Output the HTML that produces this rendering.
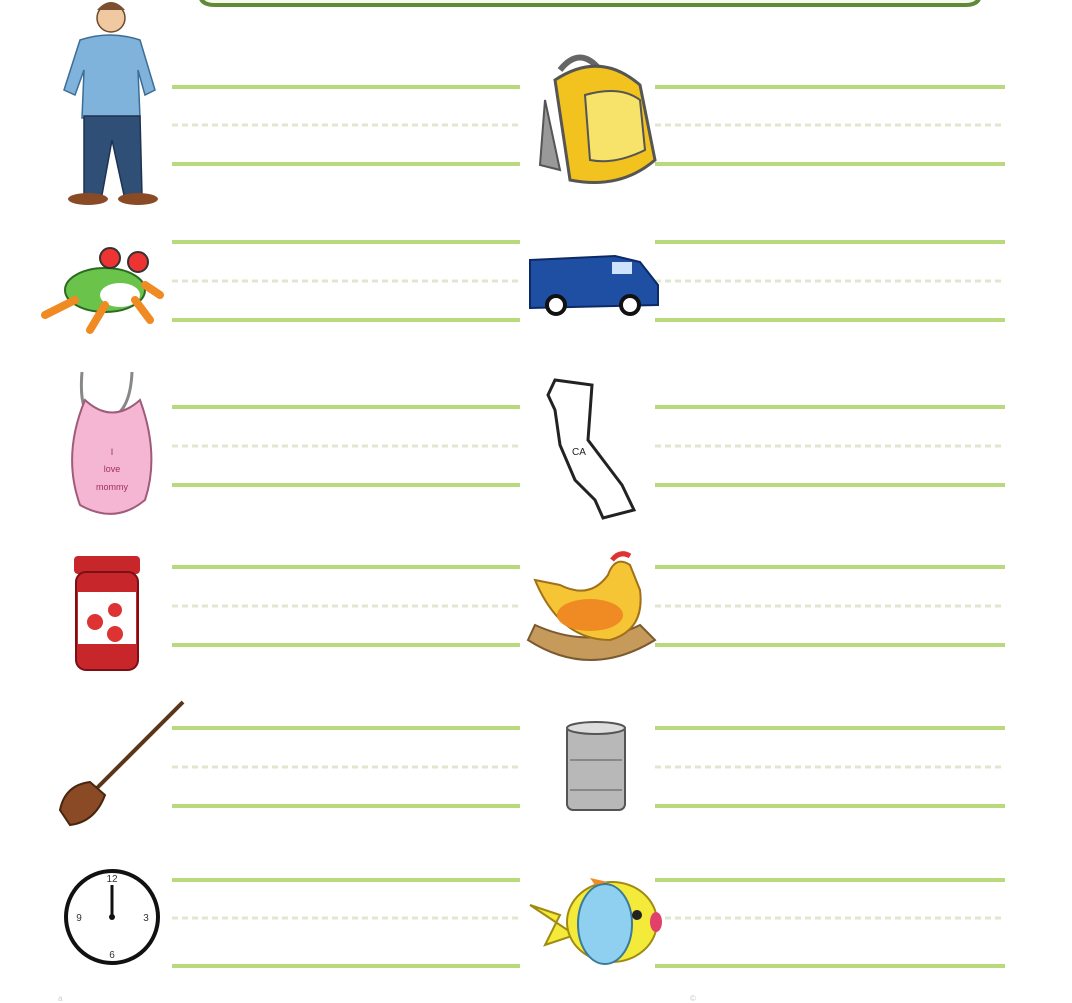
<!DOCTYPE html>
<html><head><meta charset="utf-8"><style>
html,body{margin:0;padding:0;background:#fff;width:1072px;height:1003px;overflow:hidden}
svg{display:block}
</style></head><body>
<svg width="1072" height="1003" viewBox="0 0 1072 1003" xmlns="http://www.w3.org/2000/svg">
<rect width="1072" height="1003" fill="#fff"/>
<path d="M200,-20 L200,-6 Q200,5 215,5 L965,5 Q980,5 980,-6 L980,-20" fill="#f6fbee" stroke="#5f8a3a" stroke-width="4"/>
<g stroke="#b8d97c" stroke-width="4">
<line x1="172" y1="87" x2="520" y2="87"/><line x1="172" y1="164" x2="520" y2="164"/>
<line x1="655" y1="87" x2="1005" y2="87"/><line x1="655" y1="164" x2="1005" y2="164"/>
<line x1="172" y1="242" x2="520" y2="242"/><line x1="172" y1="320" x2="520" y2="320"/>
<line x1="655" y1="242" x2="1005" y2="242"/><line x1="655" y1="320" x2="1005" y2="320"/>
<line x1="172" y1="407" x2="520" y2="407"/><line x1="172" y1="485" x2="520" y2="485"/>
<line x1="655" y1="407" x2="1005" y2="407"/><line x1="655" y1="485" x2="1005" y2="485"/>
<line x1="172" y1="567" x2="520" y2="567"/><line x1="172" y1="645" x2="520" y2="645"/>
<line x1="655" y1="567" x2="1005" y2="567"/><line x1="655" y1="645" x2="1005" y2="645"/>
<line x1="172" y1="728" x2="520" y2="728"/><line x1="172" y1="806" x2="520" y2="806"/>
<line x1="655" y1="728" x2="1005" y2="728"/><line x1="655" y1="806" x2="1005" y2="806"/>
<line x1="172" y1="880" x2="520" y2="880"/><line x1="172" y1="966" x2="520" y2="966"/>
<line x1="655" y1="880" x2="1005" y2="880"/><line x1="655" y1="966" x2="1005" y2="966"/>
</g>
<g stroke="#dfe8cf" stroke-width="3" stroke-dasharray="6 4">
<line x1="172" y1="125" x2="520" y2="125"/><line x1="655" y1="125" x2="1005" y2="125"/>
<line x1="172" y1="281" x2="520" y2="281"/><line x1="655" y1="281" x2="1005" y2="281"/>
<line x1="172" y1="446" x2="520" y2="446"/><line x1="655" y1="446" x2="1005" y2="446"/>
<line x1="172" y1="606" x2="520" y2="606"/><line x1="655" y1="606" x2="1005" y2="606"/>
<line x1="172" y1="767" x2="520" y2="767"/><line x1="655" y1="767" x2="1005" y2="767"/>
<line x1="172" y1="918" x2="520" y2="918"/><line x1="655" y1="918" x2="1005" y2="918"/>
</g>
<!-- man -->
<circle cx="111" cy="18" r="14" fill="#f1c9a0" stroke="#6b4a2b" stroke-width="1.5"/>
<path d="M97,10 Q111,-6 125,10" fill="#7a5030"/>
<path d="M80,40 Q110,30 140,40 L155,90 L145,95 L138,70 L140,118 L82,118 L84,70 L75,95 L64,90 Z" fill="#7fb3dc" stroke="#3d6d94" stroke-width="1.5"/>
<path d="M84,116 L140,116 L142,195 L124,195 L112,140 L102,195 L84,195 Z" fill="#2f4f76" stroke="#1d3350" stroke-width="1.5"/>
<ellipse cx="88" cy="199" rx="20" ry="6" fill="#8a4a25"/>
<ellipse cx="138" cy="199" rx="20" ry="6" fill="#8a4a25"/>
<!-- backpack -->
<path d="M560,70 Q580,45 600,70" fill="none" stroke="#666" stroke-width="6"/>
<path d="M545,100 L540,165 L560,170 Z" fill="#999" stroke="#555" stroke-width="2"/>
<path d="M555,80 Q600,50 640,85 L655,160 Q620,190 570,180 Z" fill="#f2c21e" stroke="#555" stroke-width="3"/>
<path d="M585,95 Q620,85 640,100 L645,150 Q615,165 590,160 Z" fill="#f7e36a" stroke="#555" stroke-width="2"/>
<!-- frog -->
<ellipse cx="105" cy="290" rx="40" ry="22" fill="#6ac34a" stroke="#2b6b20" stroke-width="2"/>
<circle cx="110" cy="258" r="10" fill="#e33" stroke="#333" stroke-width="2"/>
<circle cx="138" cy="262" r="10" fill="#e33" stroke="#333" stroke-width="2"/>
<ellipse cx="120" cy="295" rx="20" ry="12" fill="#fff"/>
<path d="M45,315 L75,300 M90,330 L105,305 M150,320 L135,300 M160,295 L145,285" stroke="#f08a22" stroke-width="8" stroke-linecap="round"/>
<!-- van -->
<path d="M530,260 L615,256 L640,262 L658,285 L658,305 L530,308 Z" fill="#1e4fa3" stroke="#0d2a66" stroke-width="2"/>
<rect x="612" y="262" width="20" height="12" fill="#cfe3ff"/>
<circle cx="556" cy="305" r="9" fill="#fff" stroke="#111" stroke-width="4"/>
<circle cx="630" cy="305" r="9" fill="#fff" stroke="#111" stroke-width="4"/>
<!-- bib -->
<path d="M82,372 Q78,420 100,420 Q130,420 132,372" fill="none" stroke="#888" stroke-width="3"/>
<path d="M85,400 Q112,425 140,400 Q160,455 145,500 Q115,525 80,505 Q62,455 85,400 Z" fill="#f4b6d2" stroke="#a05b7a" stroke-width="2"/>
<text x="112" y="455" font-family="Liberation Sans,sans-serif" font-size="9" fill="#a03060" text-anchor="middle">I</text>
<text x="112" y="472" font-family="Liberation Sans,sans-serif" font-size="9" fill="#a03060" text-anchor="middle">love</text>
<text x="112" y="490" font-family="Liberation Sans,sans-serif" font-size="9" fill="#a03060" text-anchor="middle">mommy</text>
<!-- california -->
<path d="M555,380 L592,385 L588,440 L622,485 L634,510 L603,518 L595,500 L575,480 L560,445 L555,410 L548,395 Z" fill="#fff" stroke="#222" stroke-width="3"/>
<text x="572" y="455" font-family="Liberation Sans,sans-serif" font-size="10" fill="#222">CA</text>
<!-- jam -->
<rect x="74" y="556" width="66" height="18" rx="4" fill="#c7262b"/>
<rect x="76" y="572" width="62" height="98" rx="10" fill="#c7262b" stroke="#7a1015" stroke-width="2"/>
<rect x="78" y="592" width="58" height="52" fill="#fff"/>
<circle cx="95" cy="622" r="8" fill="#d33"/><circle cx="115" cy="634" r="8" fill="#d33"/><circle cx="115" cy="610" r="7" fill="#d33"/>
<!-- hen -->
<path d="M528,640 Q590,680 655,640 L640,625 Q590,650 535,625 Z" fill="#c59a5a" stroke="#7a5a30" stroke-width="2"/>
<path d="M535,580 Q560,640 610,640 Q645,630 640,590 L630,565 Q615,555 608,575 Q590,600 560,585 Z" fill="#f5c535" stroke="#a0701a" stroke-width="2"/>
<ellipse cx="590" cy="615" rx="33" ry="16" fill="#f08a22"/>
<path d="M612,560 Q620,550 630,556" stroke="#d33" stroke-width="5" fill="none"/>
<!-- broom -->
<line x1="95" y1="790" x2="183" y2="702" stroke="#5a3518" stroke-width="4"/>
<path d="M60,810 Q65,785 90,782 L105,795 Q95,822 70,825 Z" fill="#8a4a25" stroke="#4a2510" stroke-width="2"/>
<!-- can -->
<rect x="567" y="725" width="58" height="85" rx="6" fill="#b8b8b8" stroke="#555" stroke-width="2"/>
<ellipse cx="596" cy="728" rx="29" ry="6" fill="#ddd" stroke="#555" stroke-width="2"/>
<line x1="570" y1="760" x2="622" y2="760" stroke="#888" stroke-width="2"/>
<line x1="570" y1="790" x2="622" y2="790" stroke="#888" stroke-width="2"/>
<!-- clock -->
<circle cx="112" cy="917" r="46" fill="#fff" stroke="#111" stroke-width="4"/>
<line x1="112" y1="917" x2="112" y2="885" stroke="#111" stroke-width="3"/>
<circle cx="112" cy="917" r="3" fill="#111"/>
<g font-family="Liberation Sans,sans-serif" font-size="10" fill="#333" text-anchor="middle">
<text x="112" y="882">12</text><text x="146" y="921">3</text><text x="112" y="958">6</text><text x="79" y="921">9</text></g>
<!-- fish -->
<path d="M530,905 L560,915 L545,945 L575,935 Z" fill="#f4ea3a" stroke="#a08a10" stroke-width="2"/>
<ellipse cx="612" cy="922" rx="45" ry="40" fill="#f4ea3a" stroke="#a08a10" stroke-width="2"/>
<ellipse cx="605" cy="924" rx="27" ry="40" fill="#8fd0f0" stroke="#3a7a9a" stroke-width="2"/>
<path d="M595,885 L590,878 L608,882 Z" fill="#f08a22"/>
<circle cx="637" cy="915" r="5" fill="#222"/>
<ellipse cx="656" cy="922" rx="6" ry="10" fill="#e0406a"/>
<g fill="#ccc" font-family="Liberation Sans,sans-serif" font-size="8">
<text x="58" y="1001">a</text>
<text x="690" y="1001">©</text>
</g>
</svg>
</body></html>
